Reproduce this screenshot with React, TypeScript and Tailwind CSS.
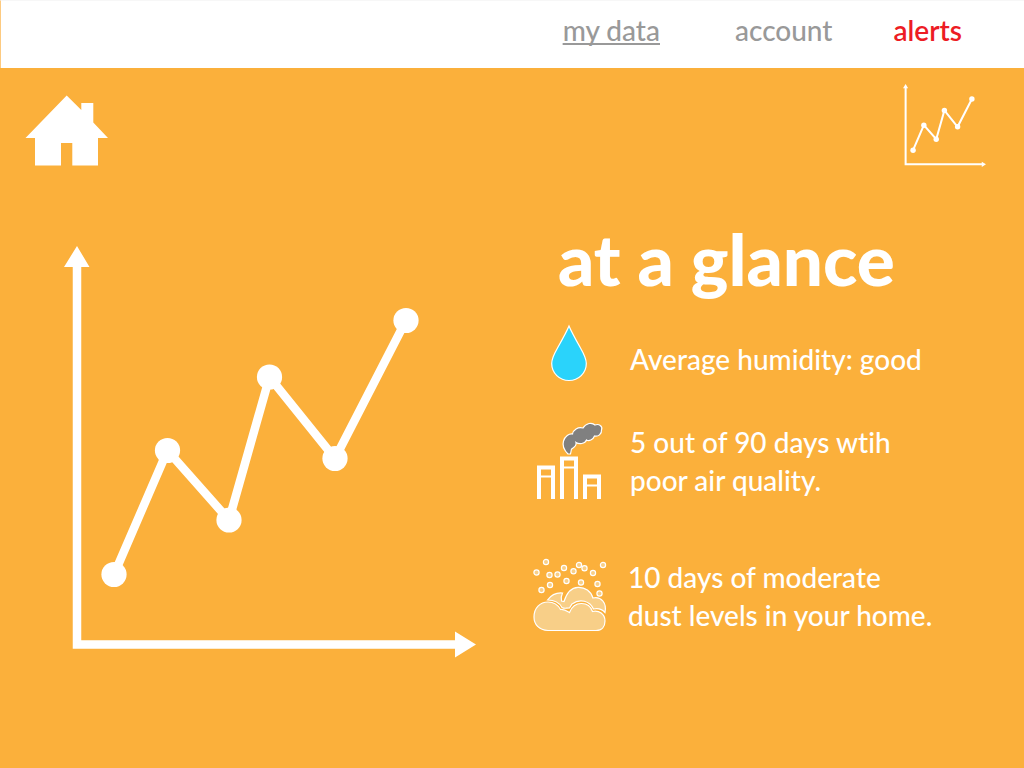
import type { ReactNode } from "react";

const points = [
  [50, 328.5], [103.5, 204.5], [165, 274], [205.5, 131], [271, 212.5], [342, 74.5],
];

function ChartDrawing({ className, line = 8.5, dot = 12.6 }: { className: string; line?: number; dot?: number }) {
  return (
    <svg viewBox="0 0 412 412" className={className} fill="white" role="img" aria-label="Air quality over time">
      <path d="M13 0 25.500 21H0ZM412 398.500 391 411.500V385.500Z" />
      <path d="M13 16V398.500H396" fill="none" stroke="white" strokeWidth={line} />
      <polyline points={points.map((p) => p.join(",")).join(" ")} fill="none" stroke="white" strokeWidth={line} />
      {points.map(([x, y]) => (
        <circle key={x} cx={x} cy={y} r={dot} />
      ))}
    </svg>
  );
}

function HomeIcon() {
  return (
    <svg viewBox="0 0 84 72" className="h-[72px] w-[84px]" fill="white" aria-hidden="true">
      <path d="M41.700 .5 56.300 15V8H68.300V27.500L83 43H73V70.500H47.300V48H36V70.500H10V43H.5Z" />
    </svg>
  );
}

function DropIcon() {
  return (
    <svg viewBox="1 0 38 58" className="h-[58px] w-[38px]" fill="#2ad3fb" stroke="white" strokeWidth="1.200" aria-hidden="true">
      <path d="M19 2C17 7 12 16 7.500 24C3.500 31 1.700 34.500 1.700 39.500C1.700 49 9.500 56.500 19 56.500S36.300 49 36.300 39.500C36.300 34.500 34.500 31 30.500 24C26 16 21 7 19 2Z" />
    </svg>
  );
}

function FactoryIcon() {
  return (
    <svg viewBox="0 0 68 78" className="h-[78px] w-[68px]" fill="none" stroke="white" aria-hidden="true">
      <g strokeWidth="4">
        <path d="M3 77V45.500H17V77" />
        <path d="M26 77V36.500H40V77" />
        <path d="M49 77V54.500H63V77" />
      </g>
      <path d="M3 54.500H17M26 45.500H40M49 63.500H63" strokeWidth="2" />
      <path d="M32 32C29 29 26 24 27.500 19C29 14 33 11.500 36.500 12C37 8 42 4.500 47 6C50 1 56 0 59 3C63 1.500 67 4 65.500 8C66 12 62 15 58.500 14C57 18 53 19.500 50.500 18C49 22 43 22.500 40 20.500C41 24 37 26 35.500 27L34.500 32Z" fill="#808080" strokeWidth="1.200" />
    </svg>
  );
}

const dust = [
  [13, 4], [3.5, 14.5], [16.5, 17], [24.5, 16.5], [31, 10], [40.5, 13.2],
  [46, 7], [51.5, 10.2], [60, 15], [70, 7], [8.5, 32], [17, 27],
  [33.5, 23], [48, 24.5], [64.5, 26], [66.5, 35.5],
];

function DustIcon() {
  return (
    <svg viewBox="-1 0 76 76" className="h-[76px] w-[76px]" fill="#f8cf88" stroke="white" strokeWidth="1.200" aria-hidden="true">
      {dust.map(([x, y]) => (
        <circle key={`${x}-${y}`} cx={x} cy={y} r="2.600" />
      ))}
      <path d="M14.500 42C19 36 24 34.500 29.500 35C28 38 28 40.500 28.500 43L31 43.500C34 34 38 29.500 45 29.300C52 29 58 33 60 40C68 38 74 45 72 54.500C69 51 65 50 60.500 51C57 43 47 40 39 46L36.500 50C33 50 31.500 51 29 49.500C26 44 20 42 14.500 42Z" />
      <path d="M15 72.500C6 72 1 66.500 1 59C1 50 7 44 15 44C21 44 25 47 27.500 51.500C31 51 34 53 36.500 54.500C39 48 43 45.500 48.500 45.500C54 45.500 58 49 59.500 53.500C66 52 72 56 72 63C72 68.500 69 72.500 63 72.500Z" />
    </svg>
  );
}

function Fact({ icon, children, className }: { icon: ReactNode; children: ReactNode; className: string }) {
  return (
    <li className={`flex items-center ${className}`}>
      <span className="flex w-[76px] shrink-0 justify-center">{icon}</span>
      <p className="text-[28px] leading-[38px] font-medium">{children}</p>
    </li>
  );
}

export default function App() {
  return (
    <div className="min-h-screen bg-[#fbb03b] font-['Lato',sans-serif] text-white [font-variant-ligatures:none]">
      <header className="flex h-[68px] items-start justify-end border-t border-l border-t-[#f7f7f7] border-l-[#fdca80] bg-white pt-[11px] pr-[62px]">
        <nav className="flex text-[28px] leading-9 font-medium text-[#999999]">
          <a href="#data" className="mr-[75px] underline decoration-2 underline-offset-2 [text-decoration-skip-ink:none]">my data</a>
          <a href="#account" className="mr-[61px]">account</a>
          <a href="#alerts" className="font-semibold text-[#ed1c24]">alerts</a>
        </nav>
      </header>
      <div className="flex items-start justify-between pt-4 pr-[38px] pl-[25px]">
        <a href="#home" aria-label="Home" className="pt-[11px]"><HomeIcon /></a>
        <a href="#chart" aria-label="Chart"><ChartDrawing className="h-[83px] w-[83px]" line={10} dot={13.4} /></a>
      </div>
      <main className="flex items-start pb-16">
        <div className="flex-1 pt-[79px] pr-[56px] pl-16">
          <ChartDrawing className="w-full" />
        </div>
        <section className="w-[492px] shrink-0 pt-11">
          <h1 className="pl-[26px] text-[71px] leading-[96px] font-black">at a glance</h1>
          <ul className="mt-[17px]">
            <Fact icon={<DropIcon />} className="gap-[22px] [&>p]:pt-3">Average humidity: good</Fact>
            <Fact icon={<FactoryIcon />} className="mt-10 gap-[22px]">5 out of 90 days wtih<br />poor air quality.</Fact>
            <Fact icon={<DustIcon />} className="mt-[58px] gap-5">10 days of moderate<br />dust levels in your home.</Fact>
          </ul>
        </section>
      </main>
    </div>
  );
}
